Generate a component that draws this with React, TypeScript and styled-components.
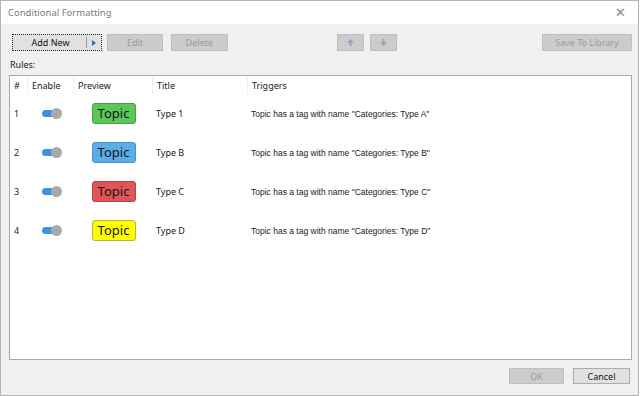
import React from 'react';
import styled, { createGlobalStyle } from 'styled-components';

const GlobalStyle = createGlobalStyle`
  html, body {
    margin: 0;
    padding: 0;
    background: #ffffff;
  }
`;

const Window = styled.div`
  box-sizing: border-box;
  width: 639px;
  height: 396px;
  border: 1px solid #b4b4b4;
  background: #f0f0f0;
  display: flex;
  flex-direction: column;
  font-family: 'Noto Sans', 'Liberation Sans', sans-serif;
  font-size: 9px;
  color: #1a1a1a;
`;

const TitleBar = styled.div`
  height: 23px;
  background: #ffffff;
  display: flex;
  align-items: center;
  justify-content: space-between;
  padding: 0 12px 0 7px;
`;

const Title = styled.span`
  font-size: 9.5px;
  color: #7a7a7a;
`;

const Close = styled.span`
  font-size: 13px;
  color: #8a8a8a;
  font-family: 'DejaVu Sans', sans-serif;
  font-weight: 200;
`;

const Body = styled.div`
  flex: 1;
  display: flex;
  flex-direction: column;
  padding: 10px 6px 0 8px;
`;

const Toolbar = styled.div`
  display: flex;
  align-items: center;
  height: 17px;
`;

const Group = styled.div<{ $gap: number; $left?: number }>`
  display: flex;
  gap: ${(p) => p.$gap}px;
  margin-left: ${(p) => (p.$left === undefined ? 'auto' : `${p.$left}px`)};
`;

const Button = styled.button<{ $w: number }>`
  box-sizing: border-box;
  width: ${(p) => p.$w}px;
  height: 17px;
  padding: 0;
  border: 1px solid #bfbfbf;
  background: #cccccc;
  color: #9a9a9a;
  font-family: inherit;
  font-size: 9px;
  display: flex;
  align-items: center;
  justify-content: center;
`;

const SplitButton = styled.div`
  box-sizing: border-box;
  width: 90px;
  height: 17px;
  border: 1px dotted #2a2a2a;
  background: #e1e1e1;
  display: flex;
  align-items: stretch;
  margin-left: 3px;
`;

const SplitMain = styled.div`
  flex: 1;
  display: flex;
  align-items: center;
  justify-content: center;
  color: #111;
  padding-left: 2px;
`;

const SplitArrow = styled.div`
  width: 14px;
  border-left: 1px solid #9a9a9a;
  margin: 2px 0;
  display: flex;
  align-items: center;
  justify-content: center;
`;

const Label = styled.div`
  margin: 7px 0 4px 1px;
  color: #222;
`;

const Table = styled.div`
  box-sizing: border-box;
  width: 623px;
  height: 285px;
  border: 1px solid #a9a9a9;
  background: #ffffff;
  display: flex;
  flex-direction: column;
`;

const cols = '17px 46px 79px 95px 1fr';

const HeaderRow = styled.div`
  display: grid;
  grid-template-columns: ${cols};
  height: 18px;
`;

const HeaderCell = styled.div<{ $first?: boolean }>`
  display: flex;
  align-items: center;
  padding-left: 4px;
  border-left: ${(p) => (p.$first ? 'none' : '1px solid #f0f0f0')};
  color: #1a1a1a;
`;

const Row = styled.div`
  display: grid;
  grid-template-columns: ${cols};
  height: 39px;
  align-items: center;
`;

const Cell = styled.div<{ $center?: boolean; $pad?: number }>`
  display: flex;
  align-items: center;
  justify-content: ${(p) => (p.$center ? 'center' : 'flex-start')};
  padding-left: ${(p) => p.$pad ?? 4}px;
`;

const Trigger = styled(Cell)`
  font-family: 'Liberation Sans', Arial, sans-serif;
  font-size: 8.5px;
`;

const Toggle = styled.div`
  position: relative;
  width: 20px;
  height: 11px;
`;

const Track = styled.div`
  position: absolute;
  left: 0;
  top: 2px;
  width: 14px;
  height: 7px;
  border-radius: 4px;
  background: #3f8fe3;
`;

const Knob = styled.div`
  position: absolute;
  right: 0;
  top: 0;
  width: 11px;
  height: 11px;
  border-radius: 50%;
  background: #a9a9a9;
`;

const Badge = styled.div<{ $bg: string; $border: string }>`
  box-sizing: border-box;
  width: 44px;
  height: 21px;
  border-radius: 3px;
  background: ${(p) => p.$bg};
  border: 1px solid ${(p) => p.$border};
  display: flex;
  align-items: center;
  justify-content: center;
  font-size: 13px;
  color: #151515;
  padding-bottom: 1px;
`;

const Footer = styled.div`
  display: flex;
  justify-content: flex-end;
  gap: 9px;
  margin-top: 8px;
  padding-right: 2px;
`;

const FooterButton = styled(Button)<{ $enabled?: boolean }>`
  height: 16px;
  background: ${(p) => (p.$enabled ? '#e1e1e1' : '#cccccc')};
  border-color: ${(p) => (p.$enabled ? '#adadad' : '#bfbfbf')};
  color: ${(p) => (p.$enabled ? '#111' : '#9a9a9a')};
`;

const rules = [
  { n: 1, title: 'Type 1', cat: 'Type A', bg: '#5cc85c', border: '#45a045' },
  { n: 2, title: 'Type B', cat: 'Type B', bg: '#5aaee6', border: '#4a90c4' },
  { n: 3, title: 'Type C', cat: 'Type C', bg: '#e05656', border: '#b84444' },
  { n: 4, title: 'Type D', cat: 'Type D', bg: '#ffff00', border: '#b5b540' },
];

const Arrow = ({ down }: { down?: boolean }) => (
  <svg width="7" height="7" viewBox="0 0 7 7">
    <g fill="#8aa6c4" transform={down ? 'rotate(180 3.5 3.5)' : undefined}>
      <polygon points="3.5,0 7,3.5 0,3.5" />
      <rect x="2.5" y="3" width="2" height="4" />
    </g>
  </svg>
);

export default function App() {
  return (
    <>
      <GlobalStyle />
      <Window>
        <TitleBar>
          <Title>Conditional Formatting</Title>
          <Close>✕</Close>
        </TitleBar>
        <Body>
          <Toolbar>
            <SplitButton>
              <SplitMain>Add New</SplitMain>
              <SplitArrow>
                <svg width="4" height="6" viewBox="0 0 4 6">
                  <polygon points="0,0 4,3 0,6" fill="#2a6cc0" />
                </svg>
              </SplitArrow>
            </SplitButton>
            <Group $gap={8} $left={5}>
              <Button $w={56}>Edit</Button>
              <Button $w={57}>Delete</Button>
            </Group>
            <Group $gap={6} $left={109}>
              <Button $w={27}>
                <Arrow />
              </Button>
              <Button $w={27}>
                <Arrow down />
              </Button>
            </Group>
            <Group $gap={0}>
              <Button $w={90}>Save To Library</Button>
            </Group>
          </Toolbar>
          <Label>Rules:</Label>
          <Table>
            <HeaderRow>
              <HeaderCell $first>#</HeaderCell>
              <HeaderCell>Enable</HeaderCell>
              <HeaderCell>Preview</HeaderCell>
              <HeaderCell>Title</HeaderCell>
              <HeaderCell>Triggers</HeaderCell>
            </HeaderRow>
            {rules.map((r) => (
              <Row key={r.n}>
                <Cell>{r.n}</Cell>
                <Cell $center>
                  <Toggle>
                    <Track />
                    <Knob />
                  </Toggle>
                </Cell>
                <Cell $center $pad={2}>
                  <Badge $bg={r.bg} $border={r.border}>
                    Topic
                  </Badge>
                </Cell>
                <Cell>{r.title}</Cell>
                <Trigger>Topic has a tag with name "Categories: {r.cat}"</Trigger>
              </Row>
            ))}
          </Table>
          <Footer>
            <FooterButton $w={55}>OK</FooterButton>
            <FooterButton $w={57} $enabled>
              Cancel
            </FooterButton>
          </Footer>
        </Body>
      </Window>
    </>
  );
}
